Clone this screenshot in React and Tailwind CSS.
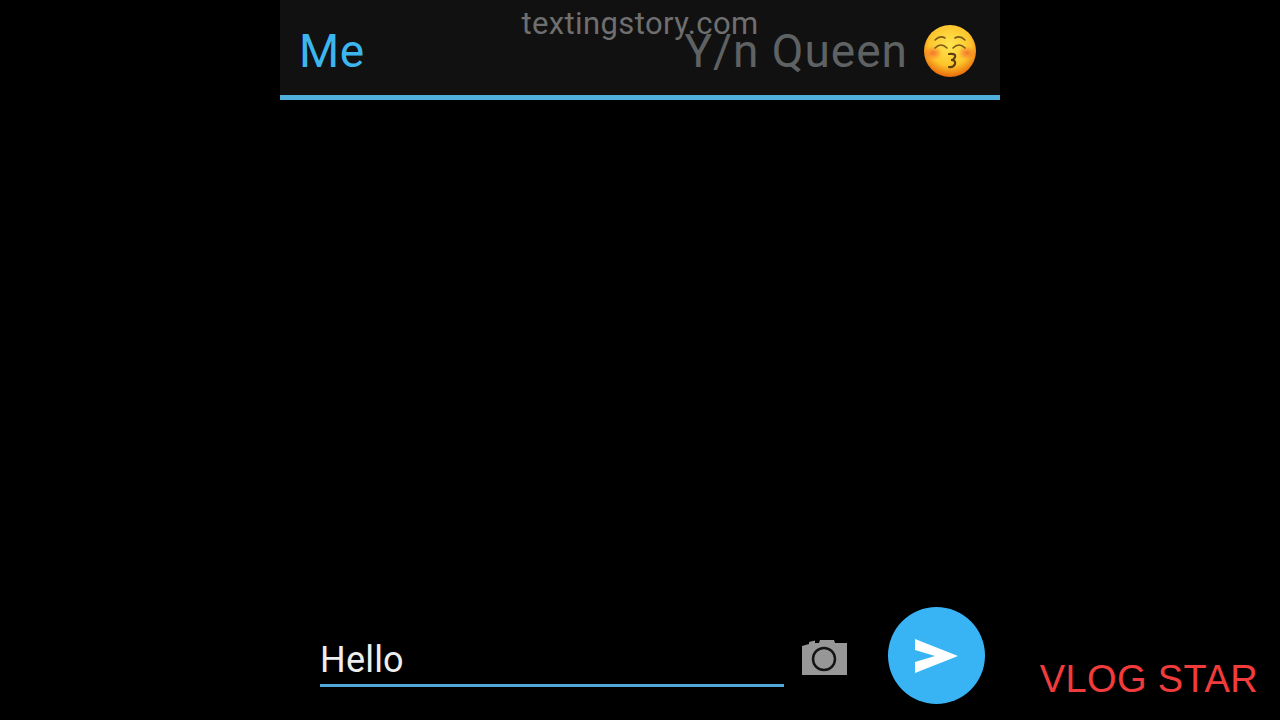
export default function App() {
  return (
    <div className="relative flex h-[720px] w-full justify-center overflow-hidden bg-black font-['Roboto',sans-serif]">
      <div className="relative flex h-full w-[720px] flex-col">
        <header className="flex h-[100px] items-center justify-between border-b-[5px] border-[#4fb0dc] bg-[#111111] pl-[19px] pr-[24px] pt-[6px]">
          <span className="text-[46px] leading-none tracking-[0.6px] text-[#3db5ee]">Me</span>
          <div className="flex items-center gap-[16px]">
            <span className="text-[46px] leading-none tracking-[1px] text-[#5f6263]">Y/n Queen</span>
            <svg width="52" height="52" viewBox="0 0 52 52">
              <defs>
                <radialGradient id="face" cx="50%" cy="38%" r="62%">
                  <stop offset="0%" stopColor="#ffe44f" />
                  <stop offset="65%" stopColor="#fdc52c" />
                  <stop offset="100%" stopColor="#e8690a" />
                </radialGradient>
                <radialGradient id="blush">
                  <stop offset="0%" stopColor="#f4622c" stopOpacity="0.8" />
                  <stop offset="100%" stopColor="#f4622c" stopOpacity="0" />
                </radialGradient>
              </defs>
              <circle cx="26" cy="26" r="26" fill="url(#face)" />
              <ellipse cx="9" cy="28" rx="9" ry="7" fill="url(#blush)" />
              <ellipse cx="43" cy="28" rx="9" ry="7" fill="url(#blush)" />
              <path d="M11 23 Q17 17 23 23 M11 15 Q16 10 21 13" fill="none" stroke="#7a5a18" strokeWidth="1.600" strokeLinecap="round" />
              <path d="M41 23 Q35 17 29 23 M41 15 Q36 10 31 13" fill="none" stroke="#7a5a18" strokeWidth="1.600" strokeLinecap="round" />
              <path d="M25 29 Q32 28 31 32 Q30 35 27 35 Q32 35 31 39 Q29 43 25 42" fill="none" stroke="#5c3d10" strokeWidth="2.200" strokeLinecap="round" />
            </svg>
          </div>
        </header>
        <span className="absolute left-1/2 top-[6px] -translate-x-1/2 text-[31px] leading-[36px] tracking-[0.4px] text-[#6f6f6f]">textingstory.com</span>
        <main className="flex-1" />
        <footer className="flex items-start pb-[16px] pl-[40px]">
          <div className="mt-[30px] flex h-[50px] w-[464px] items-end border-b-[3px] border-[#4fa8d8] pb-[6px]">
            <span className="text-[36px] leading-none tracking-[0.2px] text-[#eeeeee]">Hello</span>
          </div>
          <svg width="47" height="40" viewBox="0 0 47 40" className="ml-[17px] mt-[32px]">
            <path d="M1 7 L8 5 L8 3 L14 1.500 L14 4 L18 4 L19 1 L33 1 L34 4 L46 4 L46 36 L1 36 Z" fill="#979797" />
            <circle cx="23" cy="20" r="11" fill="none" stroke="#141414" strokeWidth="2.500" />
          </svg>
          <button className="ml-[40px] flex h-[97px] w-[97px] items-center justify-center rounded-full bg-[#38b4f5]">
            <svg width="46" height="36" viewBox="0 0 46 36" className="-ml-[1px]">
              <path d="M2 1 L45 18 L2 35 L2 24 L22 18 L2 12 Z" fill="#ffffff" />
            </svg>
          </button>
        </footer>
      </div>
      <span className="absolute bottom-[22px] right-[22px] font-['Liberation_Sans',sans-serif] text-[38px] leading-none tracking-[0.4px] text-[#f23c3c]">VLOG STAR</span>
    </div>
  );
}
